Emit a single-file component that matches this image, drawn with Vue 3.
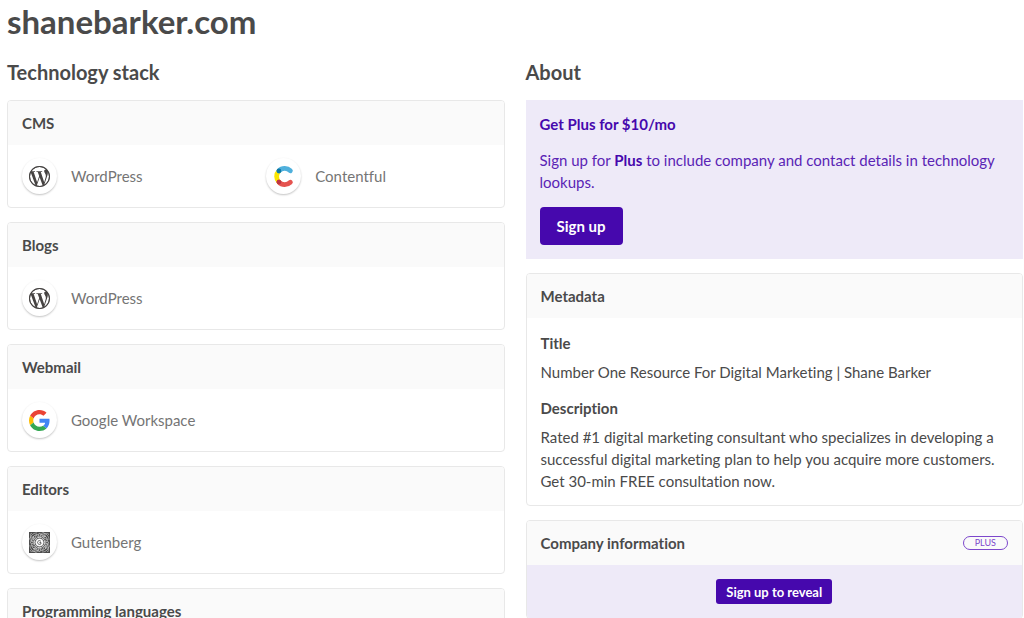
<script setup>
const groups = [
  { name: 'CMS', items: [{ name: 'WordPress', icon: 'wordpress' }, { name: 'Contentful', icon: 'contentful' }] },
  { name: 'Blogs', items: [{ name: 'WordPress', icon: 'wordpress' }] },
  { name: 'Webmail', items: [{ name: 'Google Workspace', icon: 'google' }] },
  { name: 'Editors', items: [{ name: 'Gutenberg', icon: 'gutenberg' }] },
  { name: 'Programming languages', items: [] },
]
</script>

<template>
  <main class="page">
    <h1>shanebarker.com</h1>
    <div class="columns">
      <section class="column">
        <h2>Technology stack</h2>
        <article v-for="group in groups" :key="group.name" class="card">
          <h3 class="card-head">{{ group.name }}</h3>
          <ul class="tech-list">
            <li v-for="item in group.items" :key="item.name">
              <a href="#" class="tech">
                <span class="avatar">
                  <svg v-if="item.icon === 'wordpress'" viewBox="0 0 24 24" aria-hidden="true">
                    <path fill="#464342" d="M21.469 6.825c.84 1.537 1.318 3.3 1.318 5.175 0 3.979-2.156 7.456-5.363 9.325l3.295-9.527c.615-1.54.82-2.771.82-3.864 0-.405-.026-.78-.07-1.11m-7.981.105c.647-.03 1.232-.105 1.232-.105.582-.075.514-.93-.067-.899 0 0-1.755.135-2.88.135-1.064 0-2.85-.15-2.85-.15-.585-.03-.661.855-.075.885 0 0 .54.061 1.125.09l1.68 4.605-2.37 7.08L5.354 6.9c.649-.03 1.234-.1 1.234-.1.585-.075.516-.93-.065-.896 0 0-1.746.138-2.874.138-.2 0-.438-.008-.69-.015C4.911 3.15 8.235 1.215 12 1.215c2.809 0 5.365 1.072 7.286 2.833-.046-.003-.091-.009-.141-.009-1.06 0-1.812.923-1.812 1.914 0 .89.513 1.643 1.06 2.531.411.72.89 1.643.89 2.977 0 .915-.354 1.994-.821 3.479l-1.075 3.585-3.9-11.61.001.014zM12 22.784c-1.059 0-2.081-.153-3.048-.437l3.237-9.406 3.315 9.087c.024.053.05.101.078.149-1.12.393-2.325.609-3.582.609M1.211 12c0-1.564.336-3.05.935-4.39L7.29 21.709C3.694 19.96 1.212 16.271 1.211 12M12 0C5.385 0 0 5.385 0 12s5.385 12 12 12 12-5.385 12-12S18.615 0 12 0" />
                    <circle cx="12" cy="12" r="11.4" fill="none" stroke="#464342" stroke-width="1" />
                  </svg>
                  <svg v-else-if="item.icon === 'contentful'" viewBox="1 1 22 22" fill="none" stroke-width="5" stroke-linecap="round" aria-hidden="true">
                    <path stroke="#fae501" d="M7.2 6.2a8.2 8.2 0 0 0 0 11.6" />
                    <path stroke="#4fb0dc" d="M7.2 6.2a8.4 8.4 0 0 1 12-.2" />
                    <path stroke="#e5534f" d="M7.2 17.8a8.4 8.4 0 0 0 12 .2" />
                    <circle cx="7.2" cy="6.2" r="2.5" fill="#0e78a8" />
                    <circle cx="7.2" cy="17.8" r="2.5" fill="#bd3643" />
                  </svg>
                  <svg v-else-if="item.icon === 'google'" viewBox="0 0 48 48" aria-hidden="true">
                    <path fill="#ea4335" d="M24 9.5c3.54 0 6.71 1.22 9.21 3.6l6.85-6.85C35.9 2.38 30.47 0 24 0 14.62 0 6.51 5.38 2.56 13.22l7.98 6.19C12.43 13.72 17.74 9.5 24 9.5z" />
                    <path fill="#4285f4" d="M46.98 24.55c0-1.57-.15-3.09-.38-4.55H24v9.02h12.94c-.58 2.96-2.26 5.48-4.78 7.18l7.73 6c4.51-4.18 7.09-10.36 7.09-17.65z" />
                    <path fill="#fbbc05" d="M10.53 28.59c-.48-1.45-.76-2.99-.76-4.59s.27-3.14.76-4.59l-7.98-6.19C.92 16.46 0 20.12 0 24s.92 7.54 2.56 10.78l7.97-6.19z" />
                    <path fill="#34a853" d="M24 48c6.48 0 11.93-2.13 15.89-5.81l-7.73-6c-2.15 1.45-4.92 2.3-8.16 2.3-6.26 0-11.57-4.22-13.47-9.91l-7.98 6.19C6.51 42.62 14.62 48 24 48z" />
                  </svg>
                  <svg v-else viewBox="0 0 44 44" fill="none" stroke="#ddd" stroke-width="1.2" aria-hidden="true">
                    <path fill="#4b4b4b" stroke="none" d="M0 0h44v44H0z" />
                    <g v-for="turn in [0, 90, 180, 270]" :key="turn" :transform="`rotate(${turn} 22 22)`">
                      <path d="M2 17C2 8 8 2 17 2M5 20C5 11 12 5 20 5M2 5q4 0 3-3M8 22c0-6 2-9 6-10M22 2c-3 4-3 6 0 9 3-3 3-5 0-9M11 8c-3 1-3 5 0 5s4-4 2-6M15 5c0 4 3 5 6 3" />
                      <path d="M25 2c1 5 4 6 8 4M30 1c1 3 5 4 8 2M27 9c3 2 6 1 8-1" />
                    </g>
                    <circle cx="22" cy="22" r="11" stroke-width="2" />
                    <circle cx="22" cy="22" r="8" fill="#fff" />
                    <path stroke="#555" stroke-width="2" d="M25 19.5c-3-3-7-1-7 2.5s4 5 7 3v-3h-3" />
                  </svg>
                </span>
                {{ item.name }}
              </a>
            </li>
          </ul>
        </article>
      </section>

      <section class="column">
        <h2>About</h2>
        <aside class="promo">
          <h3>Get Plus for $10/mo</h3>
          <p>Sign up for <strong>Plus</strong> to include company and contact details in technology lookups.</p>
          <button type="button" class="btn">Sign up</button>
        </aside>

        <article class="card">
          <h3 class="card-head">Metadata</h3>
          <dl class="meta">
            <dt>Title</dt>
            <dd>Number One Resource For Digital Marketing | Shane Barker</dd>
            <dt>Description</dt>
            <dd>Rated #1 digital marketing consultant who specializes in developing a successful digital marketing plan to help you acquire more customers. Get 30-min FREE consultation now.</dd>
          </dl>
        </article>

        <article class="card">
          <h3 class="card-head">Company information <span class="chip">PLUS</span></h3>
          <div class="reveal">
            <button type="button" class="btn small">Sign up to reveal</button>
          </div>
        </article>
      </section>
    </div>
  </main>
</template>

<style>
html, body {
  margin: 0;
  height: 100%;
  overflow: hidden;
  background: #fff;
}
</style>

<style scoped>
.page {
  padding: 0 1px 0 7px;
  color: #4a4a4a;
  font: 15px/22px Lato, "Open Sans", sans-serif;
  font-variant-ligatures: none;
}
h1, h2, h3, p, ul, dl, dd { margin: 0; }
h1 {
  font-size: 33px;
  line-height: 42px;
  font-weight: 700;
}
h2 {
  font-size: 20px;
  line-height: 28px;
  font-weight: 700;
}
h3, dt, strong {
  font-size: 15px;
  font-weight: 700;
}
.columns {
  display: grid;
  grid-template-columns: 1fr 1fr;
  gap: 21px;
  padding-top: 16px;
}
.column {
  display: flex;
  flex-direction: column;
  gap: 14px;
  min-width: 0;
}
.card {
  border: 1px solid #e8e8e8;
  border-radius: 4px;
  overflow: hidden;
}
.card-head {
  display: flex;
  align-items: center;
  justify-content: space-between;
  height: 44px;
  padding: 0 14px;
  background: #fafafa;
}
.tech-list {
  display: grid;
  grid-template-columns: 1fr 1fr;
  padding: 13px 14px;
  gap: 21px;
  list-style: none;
}
.tech {
  display: flex;
  align-items: center;
  gap: 14px;
  color: #757575;
  text-decoration: none;
}
.avatar {
  display: flex;
  align-items: center;
  justify-content: center;
  width: 35px;
  height: 36px;
  border-radius: 50%;
  box-shadow: 0 1px 2px rgba(0, 0, 0, 0.24);
}
.avatar svg {
  width: 21px;
  height: 21px;
}
.promo {
  padding: 13px 14px 14px;
  background: #eeeaf8;
  color: #4608ad;
}
.promo p {
  margin: 14px 0;
  color: #5a24b5;
}
.promo strong { color: #4608ad; }
.btn {
  display: block;
  height: 38px;
  padding: 0 17px;
  border: 0;
  border-radius: 4px;
  background: #4608ad;
  color: #fff;
  font: 700 15px/22px Lato, "Open Sans", sans-serif;
}
.btn.small {
  height: 25px;
  padding: 0 10px;
  border-radius: 3px;
  font-size: 13px;
}
.meta { padding: 14px 14px 13px; }
.meta dt { margin-bottom: 7px; }
.meta dd + dt { margin-top: 14px; }
.chip {
  padding: 0 11px;
  border: 1px solid #7d47cc;
  border-radius: 8px;
  color: #7d47cc;
  font-size: 9px;
  line-height: 12px;
  font-weight: 400;
}
.reveal {
  display: flex;
  justify-content: center;
  padding: 14px;
  background: #eeeaf8;
}
</style>
